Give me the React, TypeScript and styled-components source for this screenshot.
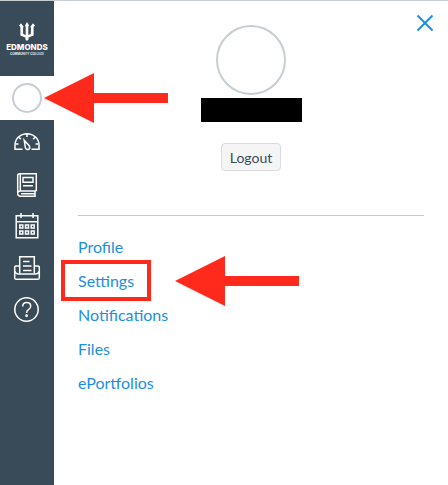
import React from "react";
import styled, { createGlobalStyle } from "styled-components";

const GlobalStyle = createGlobalStyle`
  *, *::before, *::after { box-sizing: border-box; }
  body {
    margin: 0;
    background: #fff;
    font-family: Lato, "Liberation Sans", sans-serif;
  }
`;

const Page = styled.div`
  display: flex;
  min-height: 100vh;
  border-top: 1px solid #c7cdd1;
`;

const Sidebar = styled.nav`
  flex: 0 0 54px;
  background: #394b58;
  color: #fff;
`;

const Brand = styled.a`
  display: flex;
  flex-direction: column;
  align-items: center;
  height: 75px;
  padding-top: 21px;
  color: #fff;
  text-decoration: none;
  font-family: Inter, "Liberation Sans", sans-serif;
  white-space: nowrap;
`;

const BrandName = styled.span`
  font-size: 8px;
  line-height: 10px;
  font-weight: 800;
`;

const BrandSub = styled.span`
  font-size: 3px;
  line-height: 4px;
  font-weight: 600;
`;

const NavList = styled.ul`
  margin: 0;
  padding: 0;
  list-style: none;
`;

const NavItem = styled.li<{ $active?: boolean }>`
  position: relative;
  height: ${(p) => (p.$active ? 44 : 42)}px;
  background: ${(p) => (p.$active ? "#fff" : "transparent")};
`;

const NavButton = styled.button`
  display: flex;
  align-items: center;
  justify-content: center;
  width: 100%;
  height: 100%;
  padding: 0;
  border: 0;
  background: none;
  color: inherit;
  cursor: pointer;
`;

const Avatar = styled.span<{ $size: number }>`
  display: block;
  width: ${(p) => p.$size}px;
  height: ${(p) => p.$size}px;
  border: 2px solid #c7cdd1;
  border-radius: 50%;
  background: #fff;
`;

const Icon = styled.svg`
  display: block;
  width: 32px;
  height: 32px;
  fill: none;
  stroke: currentColor;
  stroke-width: 1.5;
`;

const Tray = styled.main`
  position: relative;
  flex: 1;
  min-width: 0;
  padding: 24px;
`;

const CloseButton = styled.button`
  position: absolute;
  top: 12px;
  right: 13px;
  padding: 0;
  border: 0;
  background: none;
  color: #1b8fe0;
  cursor: pointer;
`;

const CloseIcon = styled.svg`
  display: block;
  width: 20px;
  height: 20px;
  stroke: currentColor;
  stroke-width: 2;
`;

const Account = styled.header`
  display: flex;
  flex-direction: column;
  align-items: center;
  padding-bottom: 44px;
  border-bottom: 1px solid #c7c7c7;
`;

const Redaction = styled.div`
  width: 101px;
  height: 24px;
  margin: 3px 0 21px;
  background: #000;
`;

const LogoutButton = styled.button`
  height: 28px;
  padding: 0 8px;
  border: 1px solid #d9dbdd;
  border-radius: 4px;
  background: #f5f5f5;
  color: #394b58;
  font: 14px Lato, "Liberation Sans", sans-serif;
  cursor: pointer;
`;

const LinkList = styled.ul`
  margin: 14px 0 0;
  padding: 0;
  list-style: none;
`;

const LinkItem = styled.li`
  position: relative;
  width: fit-content;
  height: 34px;
  line-height: 34px;
  font-size: 16px;
`;

const TrayLink = styled.a`
  color: #1b8fe0;
  text-decoration: none;
`;

const Highlight = styled.span`
  position: absolute;
  inset: -4px -17px -3px;
  border: 4px solid #ff2a1c;
  pointer-events: none;
`;

const ArrowShape = styled.svg<{ $left: number; $top: number }>`
  position: absolute;
  z-index: 1;
  left: ${(p) => p.$left}px;
  top: ${(p) => p.$top}px;
  width: 124px;
  height: 50px;
  fill: #ff2a1c;
  pointer-events: none;
`;

const Arrow = ({ left, top }: { left: number; top: number }) => (
  <ArrowShape $left={left} $top={top} viewBox="0 0 124 50" aria-hidden="true">
    <path d="M0 25 50 0v20h74v10H50v20z" />
  </ArrowShape>
);

const Trident = () => (
  <svg width="20" height="20" viewBox="0 0 20 20" fill="#fff" aria-hidden="true">
    <path d="M10 0 12 3.5 11.3 4.5V13L13.8 12 14 5 12.8 5.4 16 1.2 18 3.8 16.6 4.8V13.6L11.6 15.6V17.2L10 19 8.4 17.2V15.6L3.4 13.6V4.8L2 3.8 4 1.2 7.2 5.4 6 5 6.2 12 8.7 13V4.5L8 3.5z" />
  </svg>
);

const navIcons = [
  {
    label: "Dashboard",
    art: (
      <>
        <path d="M11.5 24.2H4V20a12 11.3 0 0 1 24 0v4.2h-7.5M16 9v3M8.3 12.5l1.5 1.7M23.7 12.5l-1.5 1.7M5 19h2.5M24.5 19H27" />
        <path d="M13.2 15.2l5 5.6q1.3 2.4-.5 3.5-2.2 1-3.3-1.5z" />
      </>
    ),
  },
  {
    label: "Courses",
    art: (
      <>
        <path d="M25.3 24V6.8H8.5q-1.8 0-1.8 1.8v18q0 2.6 2.6 2.6h15.5M25.3 24H9q-2.3.2-2.3 2.5M9.3 7v17M24 24.3v4.5M10 26.7h14" />
        <path d="M12 10.5h10v4.8H12zM12 18.7h10" />
      </>
    ),
  },
  {
    label: "Calendar",
    art: (
      <>
        <path d="M5.2 6.8h21.6v21.9H5.2zM5.2 12.8h21.6M10 4v5M22 4v5" />
        <path d="M8.8 16h3v3h-3zM14.5 16h3v3h-3zM20.2 16h3v3h-3zM8.8 22h3v3h-3zM14.5 22h3v3h-3zM20.2 22h3v3h-3z" />
      </>
    ),
  },
  {
    label: "Inbox",
    art: (
      <>
        <path d="M8.7 22.5V5.8h14.6v16.7M12 10.5h6.5M12 15h8.5M12 19.5h8.5" />
        <path d="M8 15H5q-1.3 0-1.3 1.3v10.4Q3.7 28.3 5.3 28.3h21.4q1.6 0 1.6-1.6V16.3Q28.3 15 27 15h-3M4 20.5q1 2.5 3 2.5h18q2 0 3-2.5" />
      </>
    ),
  },
  {
    label: "Help",
    art: (
      <>
        <circle cx="15.5" cy="16.5" r="11.7" />
        <path d="M11.7 13.5q0-4 4-4t4 3.7q0 2-2 3.2-2.1 1.2-2.1 3.6" />
        <circle cx="15.6" cy="22.8" r=".7" fill="currentColor" />
      </>
    ),
  },
];

const links = ["Profile", "Settings", "Notifications", "Files", "ePortfolios"];

export default function App() {
  return (
    <>
      <GlobalStyle />
      <Page>
        <Sidebar aria-label="Global navigation">
          <Brand href="#">
            <Trident />
            <BrandName>EDMONDS</BrandName>
            <BrandSub>COMMUNITY COLLEGE</BrandSub>
          </Brand>
          <NavList>
            <NavItem $active>
              <NavButton aria-label="Account">
                <Avatar $size={30} />
              </NavButton>
              <Arrow left={44} top={-3} />
            </NavItem>
            {navIcons.map(({ label, art }) => (
              <NavItem key={label}>
                <NavButton aria-label={label}>
                  <Icon viewBox="0 0 32 32" aria-hidden="true">{art}</Icon>
                </NavButton>
              </NavItem>
            ))}
          </NavList>
        </Sidebar>
        <Tray>
          <CloseButton aria-label="Close">
            <CloseIcon viewBox="0 0 20 20" aria-hidden="true">
              <path d="m2.5 2.5 15 15m0-15-15 15" />
            </CloseIcon>
          </CloseButton>
          <Account>
            <Avatar $size={70} />
            <Redaction />
            <LogoutButton>Logout</LogoutButton>
          </Account>
          <LinkList>
            {links.map((name) => (
              <LinkItem key={name}>
                <TrayLink href="#">{name}</TrayLink>
                {name === "Settings" && (
                  <>
                    <Highlight />
                    <Arrow left={97} top={-8} />
                  </>
                )}
              </LinkItem>
            ))}
          </LinkList>
        </Tray>
      </Page>
    </>
  );
}
